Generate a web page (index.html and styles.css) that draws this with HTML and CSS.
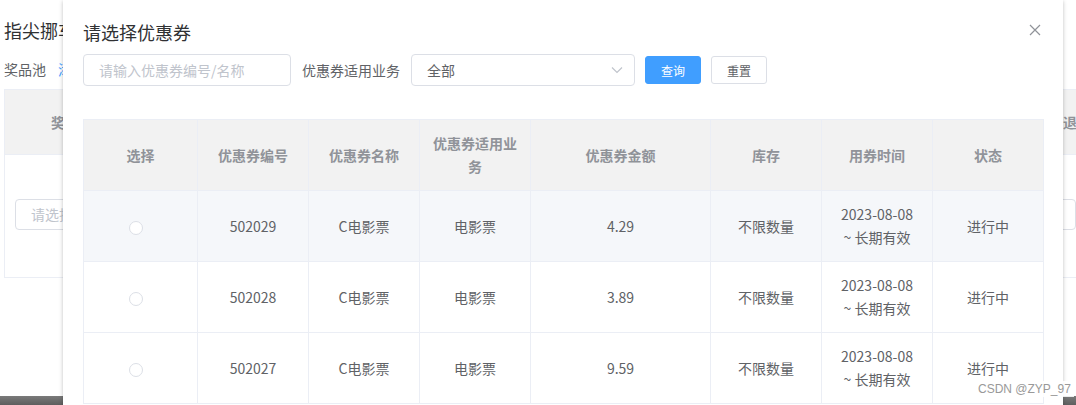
FILE: index.html
```html
<!DOCTYPE html>
<html lang="zh-CN">
<head>
<meta charset="utf-8">
<title>请选择优惠券</title>
<link rel="stylesheet" href="styles.css">
</head>
<body>
<div class="page">
  <div class="page-title">指尖挪车活动配置</div>
  <div class="page-sub"><span>奖品池</span><a class="link">添加奖品</a></div>
  <div class="bg-box">
    <div class="bg-head"><span class="bg-h1">奖品</span><span class="bg-h2">操作退</span></div>
    <div class="bg-body">
      <div class="bg-input">请选择奖品</div>
      <div class="bg-input right"></div>
    </div>
  </div>
  <div class="page-spacer"></div>
  <div class="page-bar"></div>
</div>

<div class="dialog">
  <div class="dlg-header">
    <span class="dlg-title">请选择优惠券</span>
    <svg class="dlg-close" width="12" height="12" viewBox="0 0 12 12"><path d="M1 1 L11 11 M11 1 L1 11" stroke="#909399" stroke-width="1.2" fill="none"/></svg>
  </div>
  <div class="dlg-body">
    <div class="toolbar">
      <div class="input">请输入优惠券编号/名称</div>
      <span class="label">优惠券适用业务</span>
      <div class="select"><span>全部</span>
        <svg class="arrow" width="12" height="8" viewBox="0 0 12 8"><path d="M1 1.5 L6 6.5 L11 1.5" stroke="#c0c4cc" stroke-width="1.2" fill="none"/></svg>
      </div>
      <button class="btn primary">查询</button>
      <button class="btn">重置</button>
    </div>
    <table class="tbl">
      <colgroup>
        <col style="width:114px"><col style="width:111px"><col style="width:111px"><col style="width:111px">
        <col style="width:180px"><col style="width:111px"><col style="width:111px"><col style="width:111px">
      </colgroup>
      <thead>
        <tr><th>选择</th><th>优惠券编号</th><th>优惠券名称</th><th><div class="wrap">优惠券适用业务</div></th><th>优惠券金额</th><th>库存</th><th>用券时间</th><th>状态</th></tr>
      </thead>
      <tbody>
        <tr class="hover"><td><span class="radio"></span></td><td>502029</td><td>C电影票</td><td>电影票</td><td>4.29</td><td>不限数量</td><td>2023-08-08<br>~ 长期有效</td><td>进行中</td></tr>
        <tr><td><span class="radio"></span></td><td>502028</td><td>C电影票</td><td>电影票</td><td>3.89</td><td>不限数量</td><td>2023-08-08<br>~ 长期有效</td><td>进行中</td></tr>
        <tr><td><span class="radio"></span></td><td>502027</td><td>C电影票</td><td>电影票</td><td>9.59</td><td>不限数量</td><td>2023-08-08<br>~ 长期有效</td><td>进行中</td></tr>
      </tbody>
    </table>
  </div>
</div>
<div class="watermark">CSDN @ZYP_97</div>
</body>
</html>
```

FILE: styles.css
```css
* { box-sizing: border-box; }
html, body { margin: 0; padding: 0; }
body {
  width: 1076px; height: 405px; overflow: hidden; position: relative;
  background: #fff;
  font-family: "Noto Sans CJK SC", "Noto Sans", sans-serif;
  color: #606266; font-size: 14px;
}
.page { width: 1100px; height: 405px; display: flex; flex-direction: column; padding-left: 4px; }
.page-title { font-size: 18px; color: #303133; line-height: 24px; margin-top: 18px; }
.page-sub { margin-top: 16px; line-height: 22px; display: flex; gap: 12px; }
.page-sub .link { color: #409eff; }
.bg-box { margin-top: 9px; border: 1px solid #ebeef5; height: 189px; }
.bg-head { height: 65px; background: #f2f2f2; border-bottom: 1px solid #ebeef5; display: flex; align-items: center; justify-content: space-between; font-weight: bold; color: #909399; }
.bg-h1 { margin-left: 46px; }
.bg-h2 { margin-right: 22px; }
.bg-body { display: flex; justify-content: space-between; padding: 44px 10px 0 10px; }
.bg-input { width: 160px; height: 31px; border: 1px solid #dcdfe6; border-radius: 4px; color: #c0c4cc; padding-left: 15px; line-height: 29px; }
.bg-input.right { width: 30px; margin-right: 13px; }
.page-spacer { flex: 1; }
.page-bar { height: 9px; background: linear-gradient(#7a7a7a, #5e5e5e); margin-left: -4px; }

.dialog {
  position: absolute; left: 63px; top: 0; width: 1000px; height: 420px;
  background: #fff; box-shadow: 0 1px 4px rgba(0,0,0,.25);
}
.dlg-header { padding: 20px 20px 10px; position: relative; }
.dlg-title { font-size: 18px; line-height: 24px; color: #303133; display: block; }
.dlg-close { position: absolute; right: 22px; top: 24px; }
.dlg-body { padding: 0 20px; }
.toolbar { display: flex; align-items: center; height: 32px; }
.input, .select {
  height: 32px; border: 1px solid #dcdfe6; border-radius: 4px; padding-left: 15px;
  line-height: 30px; font-size: 14px;
}
.input { width: 208px; color: #c0c4cc; }
.label { margin: 0 11px; color: #606266; line-height: 32px; }
.select { width: 224px; color: #606266; display: flex; justify-content: space-between; align-items: center; padding-right: 11px; }
.btn {
  height: 28px; width: 56px; border: 1px solid #dcdfe6; background: #fff; color: #606266;
  font-size: 12px; border-radius: 3px; margin-left: 10px; padding: 0;
  font-family: "Noto Sans CJK SC", sans-serif;
}
.btn.primary { background: #409eff; border-color: #409eff; color: #fff; }

.tbl { margin-top: 33px; width: 960px; table-layout: fixed; border-collapse: collapse; border: 1px solid #ebeef5; }
.tbl th, .tbl td { border: 1px solid #ebeef5; text-align: center; padding: 12px 10px; line-height: 23px; height: 71px; }
.tbl th { background: #f2f2f2; color: #909399; font-weight: bold; font-size: 14px; }
.tbl th .wrap { width: 90px; margin: 0 auto; }
.tbl td { color: #606266; }
.tbl tr.hover td { background: #f5f7fa; }
.radio { display: inline-block; width: 14px; height: 14px; border: 1px solid #dcdfe6; border-radius: 50%; background: #fff; vertical-align: middle; margin-right: 10px; }

.watermark {
  position: absolute; left: 975px; top: 381px; padding: 0 3px;
  font-family: "Liberation Sans", sans-serif; font-size: 12px; line-height: 16px;
  color: #999; background: rgba(255,255,255,.85);
}
```
